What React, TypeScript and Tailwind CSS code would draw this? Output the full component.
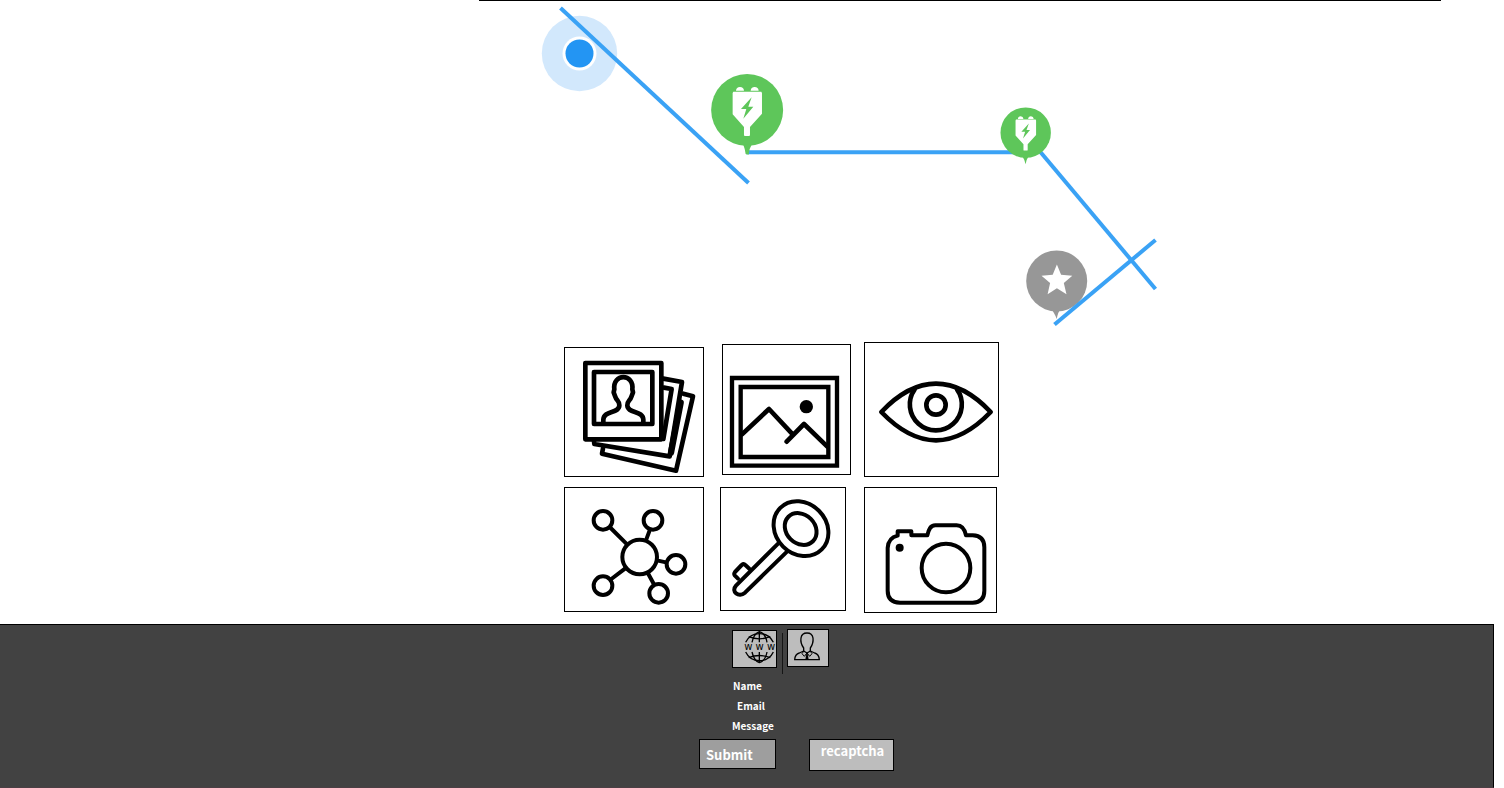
import type { ReactNode } from "react";

function PlugGlyph() {
  return (
    <>
      <path
        fill="#fff"
        d="M618 272q1-11 12-11t12 11zM662 272q1-11 12-11t12 11zM608 279l2-4h84l2 4v62l-36 40v24q0 3-3 3h-12q-3 0-3-3v-24l-34-38z"
      />
      <path fill="#5ec65a" d="M665 292L633 327H649L640 356L670 320H655Z" />
    </>
  );
}

function RouteMap() {
  return (
    <svg
      className="block h-[330px] w-[620px]"
      viewBox="540 1 620 330"
      role="img"
      aria-label="Route with charging stops"
    >
      <circle cx="579.5" cy="53.5" r="37.7" fill="#d2e8fc" />
      <circle cx="579.5" cy="53.5" r="17" fill="#fff" />
      <circle cx="579.5" cy="53.5" r="14" fill="#2395f3" />

      <g fill="#979797">
        <circle cx="1056.7" cy="281" r="30.5" />
        <path d="M1051 309q3 3 5.8 10q1-7 4-10z" />
        <path
          fill="#fff"
          d="M1056.9 264.5l4.2 10.3 11.2 1-8.5 7.3 2.7 11.2-9.6-6-9.3 6 2.5-11.2-8.6-7.3 11.2-1z"
        />
      </g>

      <g stroke="#3aa2f5" strokeWidth="4" fill="none">
        <path d="M560.500 8L748.500 183" />
        <path d="M746 152.300H1018" />
        <path d="M1040 151.500L1155.500 289" />
        <path d="M1054.500 324.500L1155.500 240" />
      </g>

      <g transform="translate(530 0) scale(.3333)">
        <circle cx="651.500" cy="330" r="108" fill="#5ec65a" />
        <path fill="#5ec65a" d="M640 434q5 12 7 28l9 2q1-18 9-30z" />
        <PlugGlyph />
      </g>
      <g transform="translate(873.700 23) scale(.2333)">
        <circle cx="651.500" cy="470" r="108" fill="#5ec65a" />
        <path fill="#5ec65a" d="M638 573q9 12 13 32q3-20 12-32z" />
        <g transform="translate(0 139)">
          <PlugGlyph />
        </g>
      </g>
    </svg>
  );
}

function Tile({
  label,
  viewBox,
  className,
  children,
}: {
  label: string;
  viewBox: string;
  className: string;
  children: ReactNode;
}) {
  return (
    <button type="button" aria-label={label} className={`border border-black ${className}`}>
      <svg
        className="block h-full w-full"
        viewBox={viewBox}
        fill="none"
        stroke="#000"
        strokeWidth="14"
        strokeLinecap="round"
        strokeLinejoin="round"
      >
        {children}
      </svg>
    </button>
  );
}

function Gallery() {
  return (
    <div className="grid grid-cols-[140px_128px_135px] items-start gap-x-4 gap-y-2.5">
      <Tile label="Photos" viewBox="15 24 414 384" className="h-[130px] w-[140px] self-end">
        <path d="M76 69H304V298H76Z" />
        <path d="M102 96H277V252H102Z" />
        <path d="M130 250V239C131 210 178 222 178 196C178 181 170 184 165 168L161 157L163 148C157 99 223 99 217 148L219 157L215 168C210 184 202 181 202 196C202 222 249 210 250 239V250" />
        <path d="M310 116L366 126L329 349L103 312L102 303" />
        <path d="M312 143L335 147L310 297" />
        <path d="M370 161L399 169L348 392L126 341L129 325" />
        <path d="M362 188L333 338" strokeWidth="19" />
      </Tile>
      <Tile label="Picture" viewBox="21 15 381 387" className="mb-0.5 ml-0.5 h-[131px] w-[129px] self-end">
        <g strokeLinejoin="miter" strokeWidth="13">
          <path d="M48 114H363V377H48Z" />
          <path d="M74 141H337V351H74Z" />
        </g>
        <path d="M78 283L159 207L228 281M212 305L264 252L334 320" />
        <circle cx="271" cy="200" r="20" fill="#000" stroke="none" />
      </Tile>
      <Tile label="View" viewBox="15 9 399 399" className="h-[135px] w-[135px]">
        <path d="M64 216Q145 131 228 131T392 216Q310 301 228 301T64 216Z" />
        <path d="M164 148A78 78 0 1 0 291 148" />
        <circle cx="228" cy="195" r="29" />
      </Tile>
      <Tile label="Network" viewBox="15 12 414 369" className="h-[125px] w-[140px]">
        <g strokeWidth="12">
          <circle cx="239" cy="219" r="52" />
          <circle cx="129" cy="109" r="28" />
          <circle cx="279" cy="109" r="28" />
          <circle cx="348" cy="241" r="28" />
          <circle cx="129" cy="305" r="28" />
          <circle cx="296" cy="328" r="28" />
          <path d="M152 132L199 179M269 139L259 166M294 230L318 235M154 285L196 253M265 270L281 299" />
        </g>
      </Tile>
      <Tile label="Key" viewBox="15 12 372 366" className="h-[124px] w-[126px]">
        <g strokeWidth="12">
          <ellipse cx="255" cy="134" rx="88" ry="76" transform="rotate(45 255 134)" />
          <ellipse cx="254" cy="135" rx="52" ry="43" transform="rotate(45 254 135)" />
          <path d="M187 178L60 305C44 323 68 342 87 326L213 203" />
          <path d="M66 284L56 274Q53 269 57 264L77 243Q83 238 88 243L100 254" />
        </g>
      </Tile>
      <Tile label="Camera" viewBox="15 12 393 372" className="h-[126px] w-[133px]">
        <g strokeWidth="12">
          <path d="M113 155V142H154V154H202C206 136 211 124 226 124H290C307 124 314 136 318 154H338Q373 155 373 190V320Q373 355 338 356H120Q83 355 83 320V192Q85 161 113 155Z" />
          <circle cx="258" cy="252" r="73" />
        </g>
        <circle cx="119" cy="191" r="12" fill="#000" stroke="none" />
      </Tile>
    </div>
  );
}

function Field({ id, label, className }: { id: string; label: string; className: string }) {
  return (
    <div className={`flex h-5 items-center gap-2 ${className}`}>
      <label htmlFor={id}>{label}</label>
      <input id={id} className="h-4 w-24 bg-transparent outline-none" />
    </div>
  );
}

function ContactFooter() {
  return (
    <footer className="mr-2.5 flex-1 border-t border-r border-b border-black border-b-[#4b3f44] bg-[#424242] pt-1 pb-4 pl-[699px] font-['Noto_Sans_CJK_SC',sans-serif] font-bold text-white">
      <div className="flex items-start pl-[33px]">
        <button
          type="button"
          aria-label="Website"
          className="mt-px h-[38px] w-[45px] border border-black bg-[#bdbdbd]"
        >
          <svg className="block h-full w-full" viewBox="129 33 129 108" fill="none" stroke="#000" strokeWidth="4">
            <path d="M167 67A46 46 0 0 1 250 67M167 96A46 46 0 0 0 250 96" />
            <path d="M208 35V67M208 96V128M186 67C190 50 199 38 208 35C219 38 228 50 231 67M186 96C190 113 199 125 208 128C219 125 228 113 231 96" />
            <path d="M176 50Q208 63 241 50M176 113Q208 100 241 113" />
            <text
              x="209"
              y="90"
              textAnchor="middle"
              fill="#000"
              stroke="none"
              className="font-['DejaVu_Sans',sans-serif] text-[30px] font-normal"
            >
              w w w
            </text>
          </svg>
        </button>
        <div className="mt-1 mr-1 ml-[5px] h-[41px] w-px bg-[#151515]" />
        <button
          type="button"
          aria-label="Profile"
          className="h-[38px] w-[42px] border border-black bg-[#bdbdbd]"
        >
          <svg
            className="block h-full w-full"
            viewBox="294 30 120 108"
            fill="none"
            stroke="#000"
            strokeWidth="4"
            strokeLinejoin="round"
          >
            <path d="M341 94V84C331 70 332 60 333 54C336 34 366 34 369 54C370 62 370 71 361 84V94" />
            <path d="M341 93L328 99Q315 103 314 119H388Q387 103 374 99L361 93L351 99Z" />
            <path d="M341 94L336 101L343 109L351 99L359 109L366 101L361 94" strokeWidth="3" />
            <path d="M349 101H353L355 117H347Z" fill="#000" strokeWidth="1" />
          </svg>
        </button>
      </div>
      <form onSubmit={(event) => event.preventDefault()}>
        <div className="pt-px pl-[33px] text-[10px]">
          <Field id="name" label="Name" className="pl-px" />
          <Field id="email" label="Email" className="pl-[5px]" />
          <Field id="message" label="Message" className="" />
        </div>
        <div className="mt-1 flex items-start gap-[33px] text-[13px] leading-5">
          <button
            type="submit"
            className="h-[30px] w-[77px] border border-black bg-[#9e9e9e] pt-0.5 pl-1.5 text-left"
          >
            Submit
          </button>
          <button
            type="button"
            className="h-8 w-[85px] border border-black bg-[#bdbdbd] pb-2 pl-0.5"
          >
            recaptcha
          </button>
        </div>
      </form>
    </footer>
  );
}

export default function App() {
  return (
    <div className="flex min-h-screen flex-col bg-white">
      <main className="pr-[63px] pb-[11px] pl-[479px]">
        <section className="mb-[11px] border-t border-black pl-[61px]">
          <RouteMap />
        </section>
        <section className="pl-[85px]">
          <Gallery />
        </section>
      </main>
      <ContactFooter />
    </div>
  );
}
